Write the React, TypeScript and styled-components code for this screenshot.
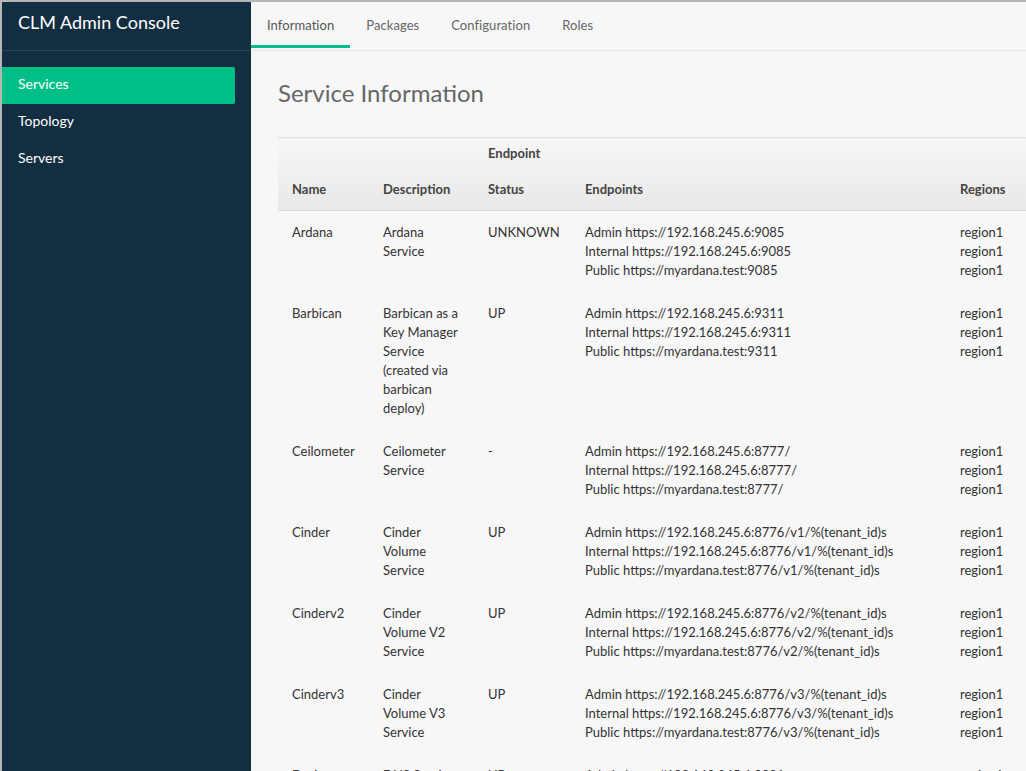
import React from "react";
import styled, { createGlobalStyle } from "styled-components";

const Global = createGlobalStyle`
  html, body { margin: 0; padding: 0; height: 100%; overflow: hidden; }
  body { font-family: Lato, "Open Sans", sans-serif; background: #f7f7f7; }
  * { box-sizing: border-box; }
`;

const Frame = styled.div`
  display: flex;
  height: 100vh;
  border-top: 2px solid #b6b6b6;
  border-left: 2px solid #b6b6b6;
  overflow: hidden;
`;

const Sidebar = styled.nav`
  flex: 0 0 249px;
  background: #132e41;
  display: flex;
  flex-direction: column;
`;

const Brand = styled.div`
  height: 49px;
  padding: 9px 0 0 16px;
  font-size: 18px;
  color: #ffffff;
  border-bottom: 1px solid #2b4558;
`;

const NavList = styled.ul`
  list-style: none;
  margin: 16px 16px 0 0;
  padding: 0;
`;

const NavItem = styled.li<{ $active?: boolean }>`
  height: 37px;
  line-height: 33px;
  padding: 0 0 4px 16px;
  font-size: 14px;
  color: #ffffff;
  background: ${(p) => (p.$active ? "#00bf86" : "transparent")};
  border-radius: 0 2px 2px 0;
`;

const Main = styled.main`
  flex: 1;
  min-width: 0;
  background: #f7f7f7;
  overflow: hidden;
`;

const TabBar = styled.div`
  display: flex;
  height: 49px;
  border-bottom: 1px solid #e6e6e6;
`;

const Tab = styled.div<{ $active?: boolean }>`
  padding: 15px 16px 0;
  font-size: 13px;
  letter-spacing: 0.06px;
  color: ${(p) => (p.$active ? "#555" : "#666")};
  position: relative;
  &::after {
    content: "";
    position: absolute;
    left: 0;
    right: 0;
    top: 43px;
    height: 3px;
    background: ${(p) => (p.$active ? "#00bf86" : "transparent")};
  }
`;

const Content = styled.section`
  padding: 27px 0 0 27px;
`;

const Title = styled.h1`
  margin: 0 0 29px;
  font-size: 24px;
  font-weight: 400;
  color: #666;
  line-height: 30px;
`;

const Table = styled.table`
  border-collapse: collapse;
  table-layout: fixed;
  width: 820px;
  font-size: 13px;
  color: #333;
`;

const Th = styled.th<{ $w: number }>`
  width: ${(p) => p.$w}px;
  text-align: left;
  vertical-align: bottom;
  font-weight: 700;
  color: #444;
  line-height: 30px;
  padding: 0 14px 6px;
  background: linear-gradient(#f6f6f6, #e8e8e8);
  border-top: 1px solid #e0e0e0;
  border-bottom: 1px solid #d5dbe0;
`;

const HeadLine = styled.div<{ $gap?: number }>`
  margin-bottom: ${(p) => p.$gap ?? 0}px;
`;

const Td = styled.td`
  vertical-align: top;
  line-height: 19px;
  padding: 12px 14px;
`;

const Line = styled.div`
  white-space: nowrap;
`;

type Row = {
  name: string;
  desc: string;
  status: string;
  host: string;
  pub: string;
  path: string;
};

const rows: Row[] = [
  { name: "Ardana", desc: "Ardana Service", status: "UNKNOWN", host: "192.168.245.6:9085", pub: "myardana.test:9085", path: "" },
  { name: "Barbican", desc: "Barbican as a Key Manager Service (created via barbican deploy)", status: "UP", host: "192.168.245.6:9311", pub: "myardana.test:9311", path: "" },
  { name: "Ceilometer", desc: "Ceilometer Service", status: "-", host: "192.168.245.6:8777", pub: "myardana.test:8777", path: "/" },
  { name: "Cinder", desc: "Cinder Volume Service", status: "UP", host: "192.168.245.6:8776", pub: "myardana.test:8776", path: "/v1/%(tenant_id)s" },
  { name: "Cinderv2", desc: "Cinder Volume V2 Service", status: "UP", host: "192.168.245.6:8776", pub: "myardana.test:8776", path: "/v2/%(tenant_id)s" },
  { name: "Cinderv3", desc: "Cinder Volume V3 Service", status: "UP", host: "192.168.245.6:8776", pub: "myardana.test:8776", path: "/v3/%(tenant_id)s" },
  { name: "Designate", desc: "DNS Service", status: "UP", host: "192.168.245.6:9001", pub: "myardana.test:9001", path: "" },
];

export default function App() {
  return (
    <>
      <Global />
      <Frame>
        <Sidebar>
          <Brand>CLM Admin Console</Brand>
          <NavList>
            <NavItem $active>Services</NavItem>
            <NavItem>Topology</NavItem>
            <NavItem>Servers</NavItem>
          </NavList>
        </Sidebar>
        <Main>
          <TabBar>
            <Tab $active>Information</Tab>
            <Tab>Packages</Tab>
            <Tab>Configuration</Tab>
            <Tab>Roles</Tab>
          </TabBar>
          <Content>
            <Title>Service Information</Title>
            <Table>
              <thead>
                <tr>
                  <Th $w={91}>Name</Th>
                  <Th $w={105}>Description</Th>
                  <Th $w={97}>
                    <HeadLine $gap={6}>Endpoint</HeadLine>
                    <HeadLine>Status</HeadLine>
                  </Th>
                  <Th $w={375}>Endpoints</Th>
                  <Th $w={152}>Regions</Th>
                </tr>
              </thead>
              <tbody>
                {rows.map((r) => (
                  <tr key={r.name}>
                    <Td>{r.name}</Td>
                    <Td>{r.desc}</Td>
                    <Td>{r.status}</Td>
                    <Td>
                      <Line>Admin https://{r.host}{r.path}</Line>
                      <Line>Internal https://{r.host}{r.path}</Line>
                      <Line>Public https://{r.pub}{r.path}</Line>
                    </Td>
                    <Td>
                      <Line>region1</Line>
                      <Line>region1</Line>
                      <Line>region1</Line>
                    </Td>
                  </tr>
                ))}
              </tbody>
            </Table>
          </Content>
        </Main>
      </Frame>
    </>
  );
}
